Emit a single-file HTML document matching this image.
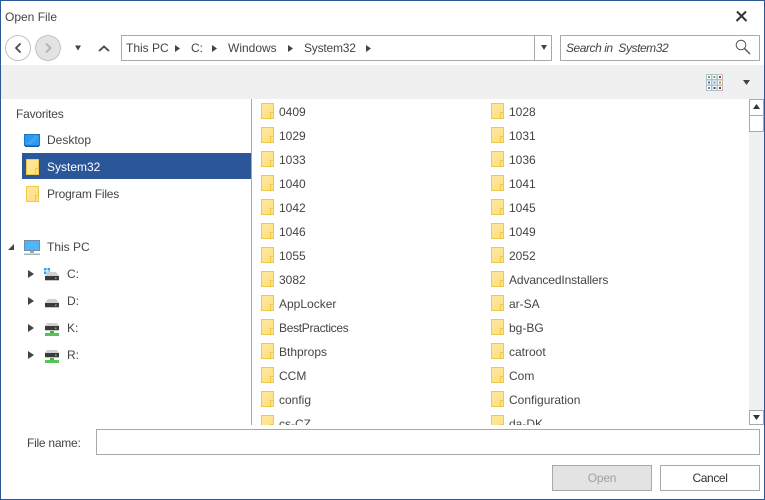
<!DOCTYPE html>
<html lang="en"><head><meta charset="utf-8"><title>Open File</title>
<style>
html,body{margin:0;padding:0;background:#fff}
#w{position:relative;width:765px;height:500px;overflow:hidden;background:#fff;font:12px "Liberation Sans",sans-serif;color:#444}
#w div,#w span,#w svg{position:absolute}
#f{left:0;top:0;width:763px;height:498px;border:1px solid #2b579a;z-index:9}
.t{white-space:nowrap;line-height:16px;height:16px}
.b{border:1px solid #a9a9a9;box-sizing:border-box;background:#fff}
.d{width:13px;height:16px;box-sizing:border-box;border:1px solid #f0c94a;background:linear-gradient(135deg,#ffe89c,#fedf82)}
.d::after{content:"";position:absolute;right:-1px;bottom:-1px;width:2px;height:5px;border:1px solid #f0c94a;background:#fee28c}
#l{left:252px;top:99px;width:497px;height:326px;overflow:hidden}
#l .t{margin-top:1px}
</style></head><body><div id="w">
<div id="f"></div>
<span class="t" style="left:5px;top:9px">Open File</span>
<svg style="left:735px;top:10px" width="13" height="13" viewBox="0 0 13 13"><path d="M2 1.500l9.500 9.500M11 1.500L1.500 11" stroke="#333" stroke-width="2" fill="none"/></svg>

<svg style="left:0;top:30px" width="120" height="35" viewBox="0 0 120 35">
<circle cx="18" cy="18" r="12.5" fill="#fff" stroke="#c4c4c4"/>
<circle cx="48" cy="18" r="12.5" fill="#e3e3e3" stroke="#c4c4c4"/>
<path d="M20.500 13.500l-4.500 4.500 4.500 4.500" fill="none" stroke="#444" stroke-width="1.700"/>
<path d="M46 13.500l4.500 4.500-4.500 4.500" fill="none" stroke="#b0b0b0" stroke-width="1.700"/>
<path d="M75 15.500h6l-3 5z" fill="#444"/>
<path d="M99 21l5-4.500 5 4.500" fill="none" stroke="#444" stroke-width="1.800"/>
</svg>

<div class="b" style="left:121px;top:35px;width:431px;height:26px"></div>
<div style="left:534px;top:35px;width:1px;height:26px;background:#a9a9a9"></div>
<svg style="left:540px;top:44px" width="8" height="7"><path d="M1 1h6L4 6z" fill="#444"/></svg>
<span class="t" style="left:126px;top:40px">This PC</span>
<span class="t" style="left:191px;top:40px">C:</span>
<span class="t" style="left:228px;top:40px">Windows</span>
<span class="t" style="left:304px;top:40px;letter-spacing:-.2px">System32</span>
<svg style="left:170px;top:42px" width="205" height="12"><path d="M5 3l5 3.500-5 3.500zM42 3l5 3.500-5 3.500zM118 3l5 3.500-5 3.500zM196 3l5 3.500-5 3.500z" fill="#444"/></svg>

<div class="b" style="left:560px;top:35px;width:200px;height:26px"></div>
<span class="t" style="left:566px;top:40px;font-style:italic;letter-spacing:-.45px">Search in&nbsp; System32</span>
<svg style="left:734px;top:38px" width="17" height="17" viewBox="0 0 17 17"><circle cx="7" cy="7" r="4.800" fill="none" stroke="#555" stroke-width="1"/><path d="M10.500 10.500l5.500 5.500" stroke="#555" stroke-width="1.400"/></svg>

<div style="left:1px;top:65px;width:763px;height:34px;background:#f0f0f0"></div>
<svg style="left:706px;top:74px" width="17" height="17" viewBox="0 0 17 17">
<g fill="#fff" stroke="#b4c0c8" stroke-width="1">
<rect x=".5" y=".5" width="5" height="5"/><rect x="6" y=".5" width="5" height="5"/><rect x="11.500" y=".5" width="5" height="5"/>
<rect x=".5" y="6" width="5" height="5"/><rect x="6" y="6" width="5" height="5"/><rect x="11.500" y="6" width="5" height="5"/>
<rect x=".5" y="11.500" width="5" height="5"/><rect x="6" y="11.500" width="5" height="5"/><rect x="11.500" y="11.500" width="5" height="5"/></g>
<rect x="2" y="2" width="2" height="2" fill="#2bb5a0"/><rect x="7.500" y="2" width="2" height="2" fill="#8aa83a"/><rect x="13" y="2" width="2" height="2" fill="#b5301a"/>
<rect x="2" y="7.500" width="2" height="2" fill="#3a70b5"/><rect x="7.500" y="7.500" width="2" height="2" fill="#2bb5c0"/><rect x="13" y="7.500" width="2" height="2" fill="#d08a20"/>
<rect x="2" y="13" width="2" height="2" fill="#35a0a0"/><rect x="7.500" y="13" width="2" height="2" fill="#3a4a70"/><rect x="13" y="13" width="2" height="2" fill="#a82a20"/>
</svg>
<svg style="left:743px;top:79px" width="9" height="7"><path d="M0 1h7l-3.500 5z" fill="#444"/></svg>

<span class="t" style="left:16px;top:106px;letter-spacing:-.2px">Favorites</span>
<svg style="left:24px;top:134px" width="16" height="13" viewBox="0 0 16 13"><rect x=".5" y=".5" width="15" height="11" fill="#2a9bf0" stroke="#1b78c0"/><path d="M3 10l8-8h3v1l-7 7z" fill="#3fa8f4"/><rect x="1" y="12" width="14" height="1" fill="#16609c"/></svg>
<span class="t" style="left:47px;top:132px">Desktop</span>
<div style="left:22px;top:153px;width:229px;height:26px;background:#2b579a"></div>
<div class="d" style="left:26px;top:159px"></div>
<span class="t" style="left:47px;top:159px;color:#fff">System32</span>
<div class="d" style="left:26px;top:186px"></div>
<span class="t" style="left:47px;top:186px;letter-spacing:-.2px">Program Files</span>

<svg style="left:8px;top:244px" width="7" height="7"><path d="M6 0v6H0z" fill="#444"/></svg>
<svg style="left:24px;top:240px" width="17" height="16" viewBox="0 0 17 16"><rect x=".5" y=".5" width="15" height="10" fill="#4fb6fc" stroke="#6f8da6"/><rect x="6" y="11" width="4" height="2" fill="#9aa"/><rect x="0" y="13.500" width="16" height="1.500" fill="#a8b4bc"/></svg>
<span class="t" style="left:47px;top:239px">This PC</span>

<svg style="left:27px;top:269px" width="8" height="95" fill="#444"><path d="M1 1l6 4-6 4zM1 28l6 4-6 4zM1 55l6 4-6 4zM1 82l6 4-6 4z"/></svg>
<svg style="left:44px;top:267px" width="16" height="17" viewBox="0 0 16 17"><path d="M0 1h2.500v2.500H0zM3.500 1H6v2.500H3.500zM0 4.500h2.500V7H0zM3.500 4.500H6V7H3.500z" fill="#1fa5f0"/><path d="M4 5h8l3 4H1z" fill="#d0d0d0"/><rect x="1" y="9" width="14" height="4" fill="#3a3a3a"/><rect x="1" y="13" width="14" height="1" fill="#c8c8c8"/><rect x="11" y="10.500" width="1.500" height="1.500" fill="#5fd04a"/></svg>
<span class="t" style="left:67px;top:266px">C:</span>
<svg style="left:44px;top:294px" width="16" height="17" viewBox="0 0 16 17"><path d="M4 5h8l3 4H1z" fill="#d0d0d0"/><rect x="1" y="9" width="14" height="4" fill="#3a3a3a"/><rect x="1" y="13" width="14" height="1" fill="#c8c8c8"/><rect x="11" y="10.500" width="1.500" height="1.500" fill="#5fd04a"/></svg>
<span class="t" style="left:67px;top:293px">D:</span>
<svg style="left:44px;top:320px" width="16" height="17" viewBox="0 0 16 17"><path d="M3 3h10l2 3H1z" fill="#d0d0d0"/><rect x="1" y="6" width="14" height="4" fill="#3a3a3a"/><rect x="1" y="10" width="14" height="1" fill="#c8c8c8"/><rect x="11" y="7.500" width="1.500" height="1.500" fill="#5fd04a"/><rect x="6" y="11" width="4" height="2" fill="#45b045"/><rect x="1" y="13" width="14" height="3" fill="#55c455"/></svg>
<span class="t" style="left:67px;top:320px">K:</span>
<svg style="left:44px;top:347px" width="16" height="17" viewBox="0 0 16 17"><path d="M3 3h10l2 3H1z" fill="#d0d0d0"/><rect x="1" y="6" width="14" height="4" fill="#3a3a3a"/><rect x="1" y="10" width="14" height="1" fill="#c8c8c8"/><rect x="11" y="7.500" width="1.500" height="1.500" fill="#5fd04a"/><rect x="6" y="11" width="4" height="2" fill="#45b045"/><rect x="1" y="13" width="14" height="3" fill="#55c455"/></svg>
<span class="t" style="left:67px;top:347px">R:</span>

<div style="left:251px;top:99px;width:1px;height:326px;background:#a9a9a9"></div>

<div id="l">
<div class="d" style="left:9px;top:4px"></div><span class="t" style="left:27px;top:4px">0409</span>
<div class="d" style="left:239px;top:4px"></div><span class="t" style="left:257px;top:4px">1028</span>
<div class="d" style="left:9px;top:28px"></div><span class="t" style="left:27px;top:28px">1029</span>
<div class="d" style="left:239px;top:28px"></div><span class="t" style="left:257px;top:28px">1031</span>
<div class="d" style="left:9px;top:52px"></div><span class="t" style="left:27px;top:52px">1033</span>
<div class="d" style="left:239px;top:52px"></div><span class="t" style="left:257px;top:52px">1036</span>
<div class="d" style="left:9px;top:76px"></div><span class="t" style="left:27px;top:76px">1040</span>
<div class="d" style="left:239px;top:76px"></div><span class="t" style="left:257px;top:76px">1041</span>
<div class="d" style="left:9px;top:100px"></div><span class="t" style="left:27px;top:100px">1042</span>
<div class="d" style="left:239px;top:100px"></div><span class="t" style="left:257px;top:100px">1045</span>
<div class="d" style="left:9px;top:124px"></div><span class="t" style="left:27px;top:124px">1046</span>
<div class="d" style="left:239px;top:124px"></div><span class="t" style="left:257px;top:124px">1049</span>
<div class="d" style="left:9px;top:148px"></div><span class="t" style="left:27px;top:148px">1055</span>
<div class="d" style="left:239px;top:148px"></div><span class="t" style="left:257px;top:148px">2052</span>
<div class="d" style="left:9px;top:172px"></div><span class="t" style="left:27px;top:172px">3082</span>
<div class="d" style="left:239px;top:172px"></div><span class="t" style="left:257px;top:172px;letter-spacing:-.12px">AdvancedInstallers</span>
<div class="d" style="left:9px;top:196px"></div><span class="t" style="left:27px;top:196px">AppLocker</span>
<div class="d" style="left:239px;top:196px"></div><span class="t" style="left:257px;top:196px">ar-SA</span>
<div class="d" style="left:9px;top:220px"></div><span class="t" style="left:27px;top:220px;letter-spacing:-.3px">BestPractices</span>
<div class="d" style="left:239px;top:220px"></div><span class="t" style="left:257px;top:220px">bg-BG</span>
<div class="d" style="left:9px;top:244px"></div><span class="t" style="left:27px;top:244px">Bthprops</span>
<div class="d" style="left:239px;top:244px"></div><span class="t" style="left:257px;top:244px">catroot</span>
<div class="d" style="left:9px;top:268px"></div><span class="t" style="left:27px;top:268px">CCM</span>
<div class="d" style="left:239px;top:268px"></div><span class="t" style="left:257px;top:268px">Com</span>
<div class="d" style="left:9px;top:292px"></div><span class="t" style="left:27px;top:292px">config</span>
<div class="d" style="left:239px;top:292px"></div><span class="t" style="left:257px;top:292px">Configuration</span>
<div class="d" style="left:9px;top:316px"></div><span class="t" style="left:27px;top:316px">cs-CZ</span>
<div class="d" style="left:239px;top:316px"></div><span class="t" style="left:257px;top:316px">da-DK</span>
</div>

<div style="left:749px;top:99px;width:15px;height:326px;background:#f0f0f0"></div>
<div class="b" style="left:749px;top:99px;width:15px;height:17px"></div>
<div class="b" style="left:749px;top:115px;width:15px;height:17px"></div>
<div class="b" style="left:749px;top:410px;width:15px;height:15px"></div>
<svg style="left:752px;top:103px" width="9" height="8"><path d="M4.500 1l3.500 5H1z" fill="#333"/></svg>
<svg style="left:752px;top:414px" width="9" height="8"><path d="M1 1h7L4.500 6z" fill="#333"/></svg>

<span class="t" style="left:27px;top:435px;letter-spacing:-.25px">File name:</span>
<div class="b" style="left:96px;top:429px;width:664px;height:26px"></div>
<div class="b" style="left:552px;top:465px;width:100px;height:26px;background:#e3e3e3"></div>
<span class="t" style="left:552px;top:470px;width:100px;text-align:center;color:#a0a0a0;letter-spacing:-.2px">Open</span>
<div class="b" style="left:660px;top:465px;width:100px;height:26px"></div>
<span class="t" style="left:660px;top:470px;width:100px;text-align:center;color:#333;letter-spacing:-.4px">Cancel</span>
</div></body></html>
